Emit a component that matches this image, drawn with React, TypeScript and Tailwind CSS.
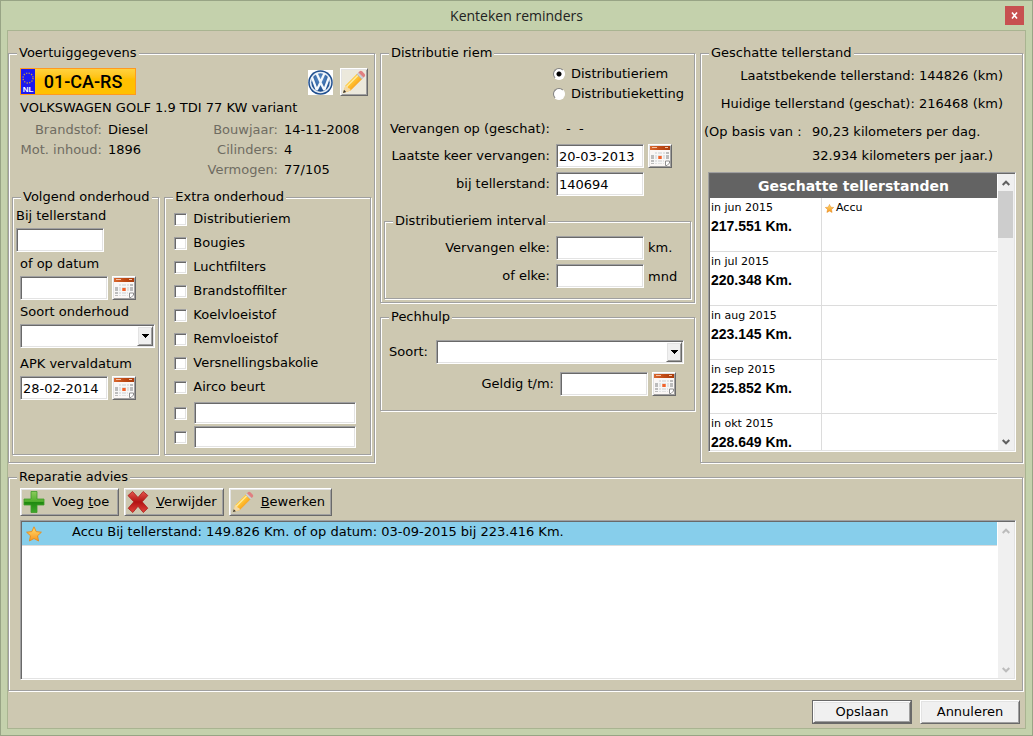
import React, { useId } from "react";

const sunken =
  "border border-t-[#a0a0a0] border-l-[#a0a0a0] border-r-white border-b-white bg-white shadow-[inset_1px_1px_0_#696969,inset_-1px_-1px_0_#e3e3e3]";
const raised =
  "border border-t-white border-l-white border-r-[#696969] border-b-[#696969] shadow-[inset_1px_1px_0_#e3e3e3,inset_-1px_-1px_0_#a0a0a0]";

function Group({
  title,
  className = "",
  children,
}: {
  title: string;
  className?: string;
  children: React.ReactNode;
}) {
  return (
    <fieldset
      className={`min-w-0 border border-[#a0a0a0] shadow-[1px_1px_0_#fff,inset_1px_1px_0_#fff] ${className}`}
    >
      <legend className="ml-2 bg-[#cdc8b1] px-0.5 pb-0.5 leading-[15px]">{title}</legend>
      {children}
    </fieldset>
  );
}

function TextBox({
  id,
  label,
  value = "",
  className = "h-6 w-[88px]",
}: {
  id?: string;
  label?: string;
  value?: string;
  className?: string;
}) {
  return (
    <input
      id={id}
      aria-label={label}
      type="text"
      defaultValue={value}
      className={`shrink-0 px-0.5 outline-none ${sunken} ${className}`}
    />
  );
}

function SelectBox({ id, className = "" }: { id: string; className?: string }) {
  return (
    <div className={`relative h-6 ${className}`}>
      <select id={id} className={`h-full w-full appearance-none px-1 outline-none ${sunken}`}>
        <option></option>
      </select>
      <span
        className={`pointer-events-none absolute top-0.5 right-0.5 bottom-0.5 flex w-4 items-center justify-center bg-[#f0f0f0] ${raised}`}
      >
        <svg width="7" height="4" viewBox="0 0 7 4" shapeRendering="crispEdges">
          <path d="M0 0h7v1H6v1H5v1H4v1H3V3H2V2H1V1H0z" fill="#000" />
        </svg>
      </span>
    </div>
  );
}

function CalendarButton({ label }: { label: string }) {
  return (
    <button
      type="button"
      aria-label={label}
      className={`flex h-6 w-6 shrink-0 items-center justify-center bg-[#f4efec] ${raised}`}
    >
      <svg width="20" height="20" viewBox="0 0 20 20" shapeRendering="crispEdges">
        <defs>
          <linearGradient id="calTop" x1="0" x2="1">
            <stop offset="0" stopColor="#d9692f" />
            <stop offset="0.5" stopColor="#c04a14" />
            <stop offset="1" stopColor="#a83c0c" />
          </linearGradient>
        </defs>
        <rect width="20" height="20" fill="#fbf7f5" />
        <rect width="20" height="4" fill="url(#calTop)" />
        <path d="M2 1h5v1H2zM15 1h3v1h-3z" fill="#f6c3a4" />
        <path d="M4 6h15v12H4z" fill="#e2e2e2" />
        <path d="M1 8h3v10H1zM16 6h3v9h-3z" fill="#bcbcbc" />
        <path
          d="M4.500 6v12M7.500 6v12M12.500 6v12M15.500 6v12M1 8.500h18M1 13.500h18M1 16.500h14"
          stroke="#f7f7f7"
          strokeWidth="1"
        />
        <rect x="8" y="10" width="4" height="3" fill="#f58a5e" />
        <rect x="9" y="10" width="2" height="3" fill="#f0622c" />
        <path d="M14 14h6v6h-6z" fill="#fbf7f5" />
        <path
          d="M15.500 19.500v-4.500h4v2l-2.500 2.500z"
          fill="#fff"
          stroke="#8f8f8f"
          strokeWidth="1"
          shapeRendering="auto"
        />
      </svg>
    </button>
  );
}

function Pencil({ size }: { size: number }) {
  const id = useId();
  return (
    <svg width={size} height={size} viewBox="0 0 24 24">
      <defs>
        <linearGradient id={id} x1="0" y1="0" x2="1" y2="1">
          <stop offset="0.2" stopColor="#ffd95a" />
          <stop offset="0.5" stopColor="#ffbf2e" />
          <stop offset="0.8" stopColor="#f28a14" />
        </linearGradient>
      </defs>
      <path d="M1 23l2.400-7.500L15.200 3.600l5.200 5.200L8.600 20.600z" fill={`url(#${id})`} />
      <path d="M1 23l2.400-7.500 1.900.4.800 2 2 .8.500 1.900z" fill="#f3d9a4" />
      <path d="M1 23l1-3.200 2.200 2.200z" fill="#333" />
      <path d="M4.800 16.600L16.300 5" stroke="#ffeb9c" strokeWidth="1.400" />
      <path d="M14.600 4.200l1.800-1.800 5.200 5.200-1.800 1.800z" fill="#b9bcc0" />
      <path d="M15.600 3.200l5.200 5.200" stroke="#e9e9ea" strokeWidth="0.9" />
      <path d="M16.400 2.400l1-1c.9-.8 2-.7 2.900.1l2.200 2.200c.8.9.9 2 .1 2.900l-1 1z" fill="#e07f80" />
    </svg>
  );
}

function Star({ size }: { size: number }) {
  const id = useId();
  return (
    <svg width={size} height={size} viewBox="0 0 16 16" className="shrink-0">
      <defs>
        <linearGradient id={id} x1="0" y1="0" x2="0" y2="1">
          <stop offset="0" stopColor="#ffdf70" />
          <stop offset="1" stopColor="#f8941e" />
        </linearGradient>
      </defs>
      <path
        d="M8 .8l2.200 4.800 5.200.6-3.900 3.600 1.100 5.200L8 12.500l-4.600 2.500 1.100-5.200L.6 6.200l5.200-.6z"
        fill={`url(#${id})`}
        stroke="#e58a1c"
        strokeWidth="0.9"
        strokeLinejoin="round"
      />
    </svg>
  );
}

function PlusIcon() {
  return (
    <svg width="22" height="24" viewBox="0 0 22 24">
      <defs>
        <linearGradient id="plusFill" x1="0" y1="0" x2="0" y2="1">
          <stop offset="0" stopColor="#8ccb5c" />
          <stop offset="0.48" stopColor="#4fae2c" />
          <stop offset="0.52" stopColor="#208a10" />
          <stop offset="1" stopColor="#3fa82c" />
        </linearGradient>
      </defs>
      <path
        d="M8 1.500h6v7.500h7v6h-7v7.500H8V15H1V9h7z"
        fill="url(#plusFill)"
        stroke="#3f9a2a"
        strokeWidth="0.8"
        strokeLinejoin="round"
      />
    </svg>
  );
}

function CrossIcon() {
  return (
    <svg width="22" height="24" viewBox="0 0 22 24">
      <defs>
        <linearGradient id="crossFill" x1="0" y1="0" x2="0" y2="1">
          <stop offset="0" stopColor="#e4574e" />
          <stop offset="0.5" stopColor="#b31212" />
          <stop offset="1" stopColor="#e0443c" />
        </linearGradient>
      </defs>
      <path
        d="M5.500 1.500L11 7.500l5.200-6 4.600 4-5.600 6.300 5.600 6.400-4.500 4.300L11 16.300l-5.200 6.200-4.600-4.200 5.600-6.500L1 5.600z"
        fill="url(#crossFill)"
        stroke="#a81a16"
        strokeWidth="0.8"
        strokeLinejoin="round"
      />
    </svg>
  );
}

function VwLogo() {
  return (
    <svg width="25" height="25" viewBox="0 0 50 50" className="bg-white">
      <defs>
        <radialGradient id="vwBlue" cx="0.5" cy="0.3" r="0.7">
          <stop offset="0" stopColor="#5f92cc" />
          <stop offset="1" stopColor="#174788" />
        </radialGradient>
      </defs>
      <circle cx="25" cy="25" r="24.500" fill="#1f4f8f" />
      <circle cx="25" cy="25" r="21.500" fill="#e6edf5" />
      <circle cx="25" cy="25" r="18.500" fill="url(#vwBlue)" />
      <path
        d="M17 6.500L25 24l8-17.500M8 14.500L17.500 40 25 25l7.500 15L42 14.500"
        fill="none"
        stroke="#f4f8fc"
        strokeWidth="4.500"
        strokeLinejoin="bevel"
      />
    </svg>
  );
}

function LicensePlate() {
  return (
    <div className="flex h-[27px] w-[116px] items-stretch border border-[#ff9a1e] bg-linear-to-b from-[#ffd23c] to-[#ffc000] to-40%">
      <div className="flex w-3.5 flex-col items-center justify-between bg-[#1c18f0]">
        <svg width="14" height="15" viewBox="0 0 14 15">
          <circle cx="7" cy="9" r="5" fill="none" stroke="#c99b3c" strokeWidth="1.300" strokeDasharray="1.300 1.318" />
        </svg>
        <span className="font-['Liberation_Sans'] text-[8px] leading-[9px] font-bold text-white">NL</span>
      </div>
      <span className="flex flex-1 items-center justify-center pr-1 font-[Roboto,sans-serif] text-[18px] leading-6 font-medium text-black">
        01-CA-RS
      </span>
    </div>
  );
}

function Chevron({ up = false, color }: { up?: boolean; color: string }) {
  return (
    <svg width="8" height="6" viewBox="0 0 8 6">
      <path d={up ? "M.7 5L4 1.700 7.300 5" : "M.7 1L4 4.300 7.300 1"} fill="none" stroke={color} strokeWidth="2" />
    </svg>
  );
}

function ScrollBar({ active = false }: { active?: boolean }) {
  const color = active ? "#606060" : "#bcbcbc";
  return (
    <div className="flex w-4 shrink-0 flex-col items-center justify-between bg-[#f0f0f0]">
      <div className="flex w-full flex-col items-center">
        <span className="flex h-[17px] items-center">
          <Chevron up color={color} />
        </span>
        {active && <span className="mr-px h-[47px] w-[15px] bg-[#cdcdcd]" />}
      </div>
      <span className="flex h-[17px] items-center">
        <Chevron color={color} />
      </span>
    </div>
  );
}

const boxClass = `h-[13px] w-[13px] shrink-0 appearance-none ${sunken}`;

function CheckRow({ label }: { label: string }) {
  return (
    <label className="flex h-6 items-center gap-[6px]">
      <input type="checkbox" className={boxClass} />
      {label}
    </label>
  );
}

function CustomCheckRow({ index }: { index: number }) {
  return (
    <div className="flex h-6 items-center gap-[7px]">
      <input type="checkbox" aria-label={`Extra ${index}`} className={boxClass} />
      <TextBox label={`Omschrijving ${index}`} className="h-[22px] w-[162px]" />
    </div>
  );
}

function RadioRow({ label, checked = false }: { label: string; checked?: boolean }) {
  return (
    <label className="flex h-5 items-center gap-[6px]">
      <input
        type="radio"
        name="distributie"
        defaultChecked={checked}
        className="h-3 w-3 appearance-none rounded-full border border-t-[#808080] border-l-[#808080] border-r-white border-b-white bg-white checked:bg-[radial-gradient(circle,#000_0_2px,#fff_3px)]"
      />
      {label}
    </label>
  );
}

function ToolButton({ icon, children }: { icon: React.ReactNode; children: React.ReactNode }) {
  return (
    <button type="button" className={`flex h-7 min-w-[99px] items-center gap-[7px] pr-1.5 pl-0.5 ${raised}`}>
      {icon}
      <span>{children}</span>
    </button>
  );
}

const months = [
  { month: "in jun 2015", km: "217.551 Km.", note: "Accu" },
  { month: "in jul 2015", km: "220.348 Km." },
  { month: "in aug 2015", km: "223.145 Km." },
  { month: "in sep 2015", km: "225.852 Km." },
  { month: "in okt 2015", km: "228.649 Km." },
];

const extras = [
  "Distributieriem",
  "Bougies",
  "Luchtfilters",
  "Brandstoffilter",
  "Koelvloeistof",
  "Remvloeistof",
  "Versnellingsbakolie",
  "Airco beurt",
];

function VehicleGroup() {
  return (
    <Group title="Voertuiggegevens" className="flex flex-col">
      <div className="mt-1.5 flex h-[30px] items-start pr-1.5 pl-[11px]">
        <LicensePlate />
        <div className="ml-auto flex items-center gap-[7px]">
          <VwLogo />
          <button
            type="button"
            aria-label="Voertuig bewerken"
            className={`flex h-7 w-7 items-center justify-center bg-[#ece9dc] ${raised}`}
          >
            <Pencil size={24} />
          </button>
        </div>
      </div>
      <div className="mb-0.5 pl-[11px] leading-5">VOLKSWAGEN GOLF 1.9 TDI 77 KW variant</div>
      <dl className="mb-[9px] grid grid-cols-[93px_1fr_90px_90px] gap-x-1.5 leading-5 [&>dt]:text-right [&>dt]:text-[#6f6c62]">
        <dt>Brandstof:</dt>
        <dd>Diesel</dd>
        <dt>Bouwjaar:</dt>
        <dd>14-11-2008</dd>
        <dt>Mot. inhoud:</dt>
        <dd>1896</dd>
        <dt>Cilinders:</dt>
        <dd>4</dd>
        <dt className="col-start-3">Vermogen:</dt>
        <dd>77/105</dd>
      </dl>
      <div className="flex gap-[5px] px-[3px] pb-[7px]">
        <Group title="Volgend onderhoud" className="flex-[147]">
          <div className="pl-[3px]">
            <label htmlFor="bij" className="block pb-0.5 leading-5">
              Bij tellerstand
            </label>
            <TextBox id="bij" className="block h-6 w-[88px]" />
          </div>
          <div className="flex flex-col pt-0.5 pr-[3px] pl-[7px]">
            <label htmlFor="datum" className="pb-0.5 leading-5">
              of op datum
            </label>
            <div className="flex gap-1">
              <TextBox id="datum" />
              <CalendarButton label="Kies datum" />
            </div>
            <label htmlFor="soortOnderhoud" className="pt-0.5 pb-0.5 leading-5">
              Soort onderhoud
            </label>
            <SelectBox id="soortOnderhoud" />
            <label htmlFor="apk" className="pt-1.5 pb-0.5 leading-5">
              APK vervaldatum
            </label>
            <div className="flex gap-1">
              <TextBox id="apk" value="28-02-2014" />
              <CalendarButton label="Kies APK datum" />
            </div>
          </div>
        </Group>
        <Group title="Extra onderhoud" className="flex-[207]">
          <div className="pt-px pb-[5px] pl-[9px]">
            {extras.map((e) => (
              <CheckRow key={e} label={e} />
            ))}
            <div className="pt-0.5">
              <CustomCheckRow index={1} />
              <CustomCheckRow index={2} />
            </div>
          </div>
        </Group>
      </div>
    </Group>
  );
}

function BeltGroup() {
  return (
    <Group title="Distributie riem">
      <div className="flex flex-col pt-0.5 pl-[172px]">
        <RadioRow label="Distributieriem" checked />
        <RadioRow label="Distributieketting" />
      </div>
      <div className="mt-3.5 grid grid-cols-[169px_1fr] gap-x-1.5 gap-y-1">
        <span className="text-right leading-[22px]">Vervangen op (geschat):</span>
        <span className="pl-2.5 leading-[22px] whitespace-pre">-  -</span>
        <label htmlFor="laatste" className="text-right leading-[23px]">
          Laatste keer vervangen:
        </label>
        <div className="flex gap-1">
          <TextBox id="laatste" value="20-03-2013" />
          <CalendarButton label="Kies vervangdatum" />
        </div>
        <label htmlFor="bijTeller" className="text-right leading-[23px]">
          bij tellerstand:
        </label>
        <TextBox id="bijTeller" value="140694" />
      </div>
      <div className="px-[3px] pt-[17px] pb-[3px]">
        <Group title="Distributieriem interval">
          <div className="grid grid-cols-[167px_88px_1fr] gap-x-1 gap-y-1 pt-1.5 pb-2.5">
            <label htmlFor="elkeKm" className="pr-0.5 text-right leading-[23px]">
              Vervangen elke:
            </label>
            <TextBox id="elkeKm" />
            <span className="h-6 leading-[23px]">km.</span>
            <label htmlFor="elkeMnd" className="pr-0.5 text-right leading-[23px]">
              of elke:
            </label>
            <TextBox id="elkeMnd" />
            <span className="h-6 leading-[26px]">mnd</span>
          </div>
        </Group>
      </div>
    </Group>
  );
}

function AssistanceGroup() {
  return (
    <Group title="Pechhulp">
      <div className="flex gap-1.5 pt-3.5 pr-2.5 pl-2">
        <label htmlFor="pechSoort" className="w-[41px] leading-[23px]">
          Soort:
        </label>
        <SelectBox id="pechSoort" className="flex-1" />
      </div>
      <div className="flex justify-end pt-2 pr-[18px] pb-3.5">
        <label htmlFor="geldig" className="mr-1.5 leading-[23px]">
          Geldig t/m:
        </label>
        <TextBox id="geldig" />
        <span className="ml-1">
          <CalendarButton label="Kies geldigheidsdatum" />
        </span>
      </div>
    </Group>
  );
}

function MileageGroup() {
  return (
    <Group title="Geschatte tellerstand">
      <div className="pr-[19px] text-right leading-7">
        <div>Laatstbekende tellerstand: 144826 (km)</div>
        <div>Huidige tellerstand (geschat): 216468 (km)</div>
      </div>
      <div className="grid grid-cols-[102px_1fr] gap-x-1.5 pl-[3px]">
        <span className="leading-7">(Op basis van :</span>
        <span className="leading-7">90,23 kilometers per dag.</span>
        <span className="col-start-2 leading-5">32.934 kilometers per jaar.)</span>
      </div>
      <div className={`mt-1.5 mr-1.5 mb-2.5 ml-[7px] flex h-[280px] p-px ${sunken}`}>
        <div className="min-w-0 flex-1 overflow-hidden pr-px">
          <table className="w-full table-fixed border-separate border-spacing-0">
            <colgroup>
              <col className="w-[112px]" />
              <col />
            </colgroup>
            <thead>
              <tr className="h-6 bg-[#636363]">
                <th colSpan={2} className="p-0 text-[14px] leading-6 font-bold text-white">
                  Geschatte tellerstanden
                </th>
              </tr>
            </thead>
            <tbody>
              {months.map((m) => (
                <tr key={m.month} className="h-[54px] align-top">
                  <td className="border-r border-b border-[#dcdcdc] p-0 pt-0.5 pl-px">
                    <div className="text-[11px] leading-4">{m.month}</div>
                    <div className="font-['Liberation_Sans',sans-serif] text-[14px] leading-5 font-bold">{m.km}</div>
                  </td>
                  <td className="border-b border-[#dcdcdc] p-0 pt-0.5 pl-[3px]">
                    {m.note && (
                      <span className="flex items-center gap-0.5 text-[11px] leading-4">
                        <Star size={9} />
                        {m.note}
                      </span>
                    )}
                  </td>
                </tr>
              ))}
            </tbody>
          </table>
        </div>
        <ScrollBar active />
      </div>
    </Group>
  );
}

function AdviceGroup() {
  return (
    <Group title="Reparatie advies" className="mt-1.5 flex flex-1 flex-col">
      <div className="flex gap-[5px] pt-0.5 pl-[11px]">
        <ToolButton icon={<PlusIcon />}>
          Voeg <u>t</u>oe
        </ToolButton>
        <ToolButton icon={<CrossIcon />}>
          <u>V</u>erwijder
        </ToolButton>
        <ToolButton icon={<Pencil size={22} />}>
          <u>B</u>ewerken
        </ToolButton>
      </div>
      <div className={`mt-1 mr-1.5 mb-2.5 ml-[11px] flex h-[160px] p-px ${sunken}`}>
        <div className="min-w-0 flex-1 pr-px">
          <div className="flex h-6 items-center gap-[30px] border-b border-[#dcdcdc] bg-[#87ceeb] pl-1">
            <Star size={16} />
            <span className="pb-1 leading-4">
              Accu Bij tellerstand: 149.826 Km. of op datum: 03-09-2015 bij 223.416 Km.
            </span>
          </div>
        </div>
        <ScrollBar />
      </div>
    </Group>
  );
}

export default function App() {
  return (
    <div className="flex min-h-screen flex-col border border-[#98a485] bg-[#c4d1ac] px-1.5 pb-1.5 font-['DejaVu_Sans',sans-serif] text-[13px] text-black">
      <header className="grid h-[29px] grid-cols-[1fr_auto_1fr] items-center">
        <h1 className="col-start-2 font-['Open_Sans',sans-serif] text-[14px] leading-5 text-[#222]">
          Kenteken reminders
        </h1>
        <button
          type="button"
          aria-label="Sluiten"
          className="mr-0.5 flex h-[19px] w-[19px] items-center justify-center justify-self-end bg-[#c75050]"
        >
          <svg width="7" height="7" viewBox="0 0 7 7">
            <path d="M1 .5l5 6M6 .5l-5 6" stroke="#fff" strokeWidth="1.600" />
          </svg>
        </button>
      </header>
      <main className="flex flex-1 flex-col border border-[#a9b491] bg-[#cdc8b1] pt-3.5 pr-0.5 pb-1">
        <div className="grid grid-cols-[367fr_315fr_323fr] gap-[5px]">
          <VehicleGroup />
          <div className="flex min-w-0 flex-col gap-1.5">
            <BeltGroup />
            <AssistanceGroup />
          </div>
          <MileageGroup />
        </div>
        <AdviceGroup />
        <footer className="mt-[9px] flex justify-end gap-2 pr-[3px]">
          <button type="button" className="h-6 w-[100px] border border-[#696969] bg-[#f0f0f0]">
            <span className={`flex h-full items-center justify-center ${raised}`}>Opslaan</span>
          </button>
          <button type="button" className={`h-6 w-[100px] bg-[#f0f0f0] ${raised}`}>
            Annuleren
          </button>
        </footer>
      </main>
    </div>
  );
}
